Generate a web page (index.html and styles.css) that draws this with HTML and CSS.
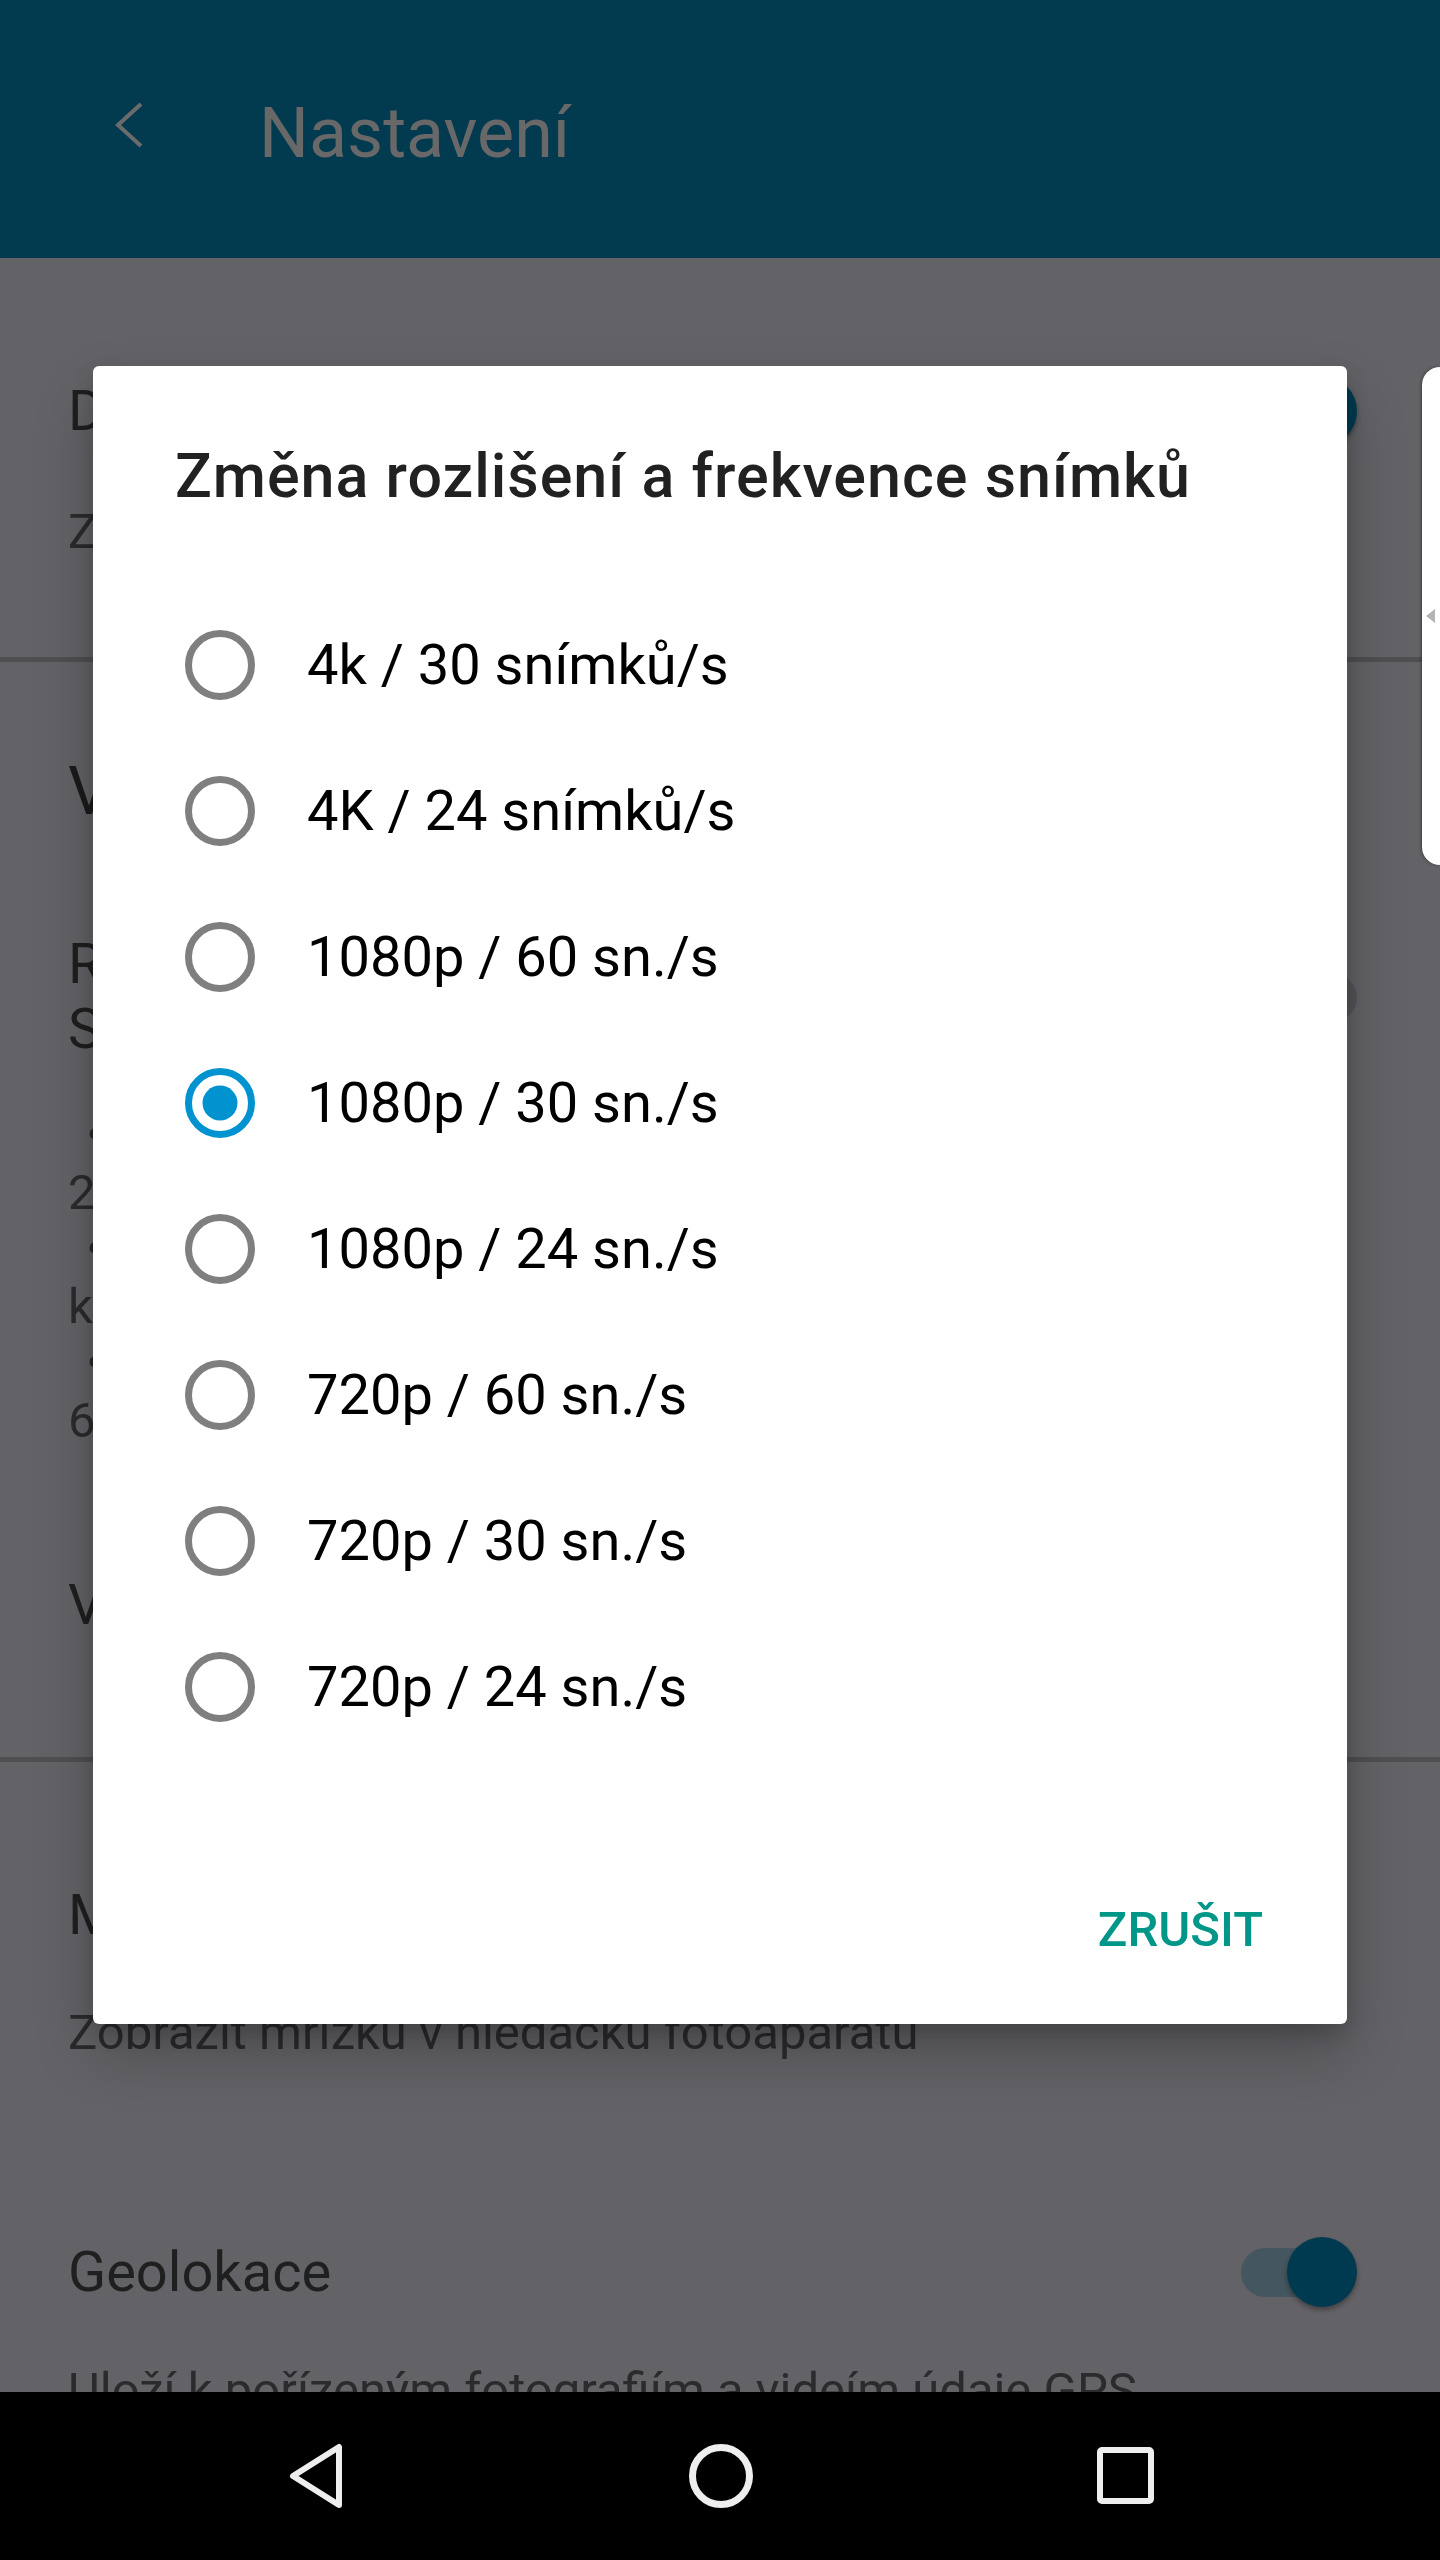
FILE: index.html
```html
<!DOCTYPE html>
<html lang="cs">
<head>
<meta charset="utf-8">
<title>Nastavení</title>
<link rel="stylesheet" href="styles.css">
</head>
<body>
<div class="screen">
  <header class="appbar">
    <svg class="back" width="32" height="46" viewBox="0 0 32 46"><polyline points="27,2 4,23 27,44" fill="none" stroke="#6b6b6b" stroke-width="4"/></svg>
    <h1 class="appbar-title">Nastavení</h1>
  </header>

  <main class="list">
    <section class="pref pref-first">
      <div class="pref-head">
        <div class="pref-title">Detekce úsměvu</div>
        <div class="toggle on"><span class="track"></span><span class="knob"></span></div>
      </div>
      <div class="pref-summary">Zachytí snímek</div>
    </section>
    <div class="divider div-1"></div>

    <section class="group">
      <div class="group-title">Video</div>
      <div class="pref-head two-line">
        <div class="pref-title">Rozlišení<br>Snímky</div>
        <div class="toggle off"><span class="track"></span><span class="knob"></span></div>
      </div>
      <div class="bullets">
        <div class="bullet-line">&nbsp;• 4K</div>
        <div>2160p</div>
        <div class="bullet-line">&nbsp;• HD</div>
        <div>kvalita</div>
        <div class="bullet-line">&nbsp;• sn.</div>
        <div>60 sn./s</div>
      </div>
      <div class="pref-title group-last">Video stabilizace</div>
    </section>
    <div class="divider div-2"></div>

    <section class="pref pref-grid">
      <div class="pref-head">
        <div class="pref-title">Mřížka</div>
      </div>
      <div class="pref-summary">Zobrazit mřížku v hledáčku fotoaparátu</div>
    </section>

    <section class="pref pref-geo">
      <div class="pref-head">
        <div class="pref-title">Geolokace</div>
        <div class="toggle on"><span class="track"></span><span class="knob"></span></div>
      </div>
      <div class="pref-summary">Uloží k pořízeným fotografiím a videím údaje GPS</div>
    </section>
  </main>

  <nav class="navbar">
    <svg class="nav-back" width="60" height="70" viewBox="0 0 60 70"><polygon points="53,6 53,64 7,35" fill="none" stroke="#eeeeee" stroke-width="6" stroke-linejoin="round"/></svg>
    <svg class="nav-home" width="70" height="70" viewBox="0 0 70 70"><circle cx="35" cy="35" r="28.5" fill="none" stroke="#eeeeee" stroke-width="7"/></svg>
    <svg class="nav-recent" width="64" height="64" viewBox="0 0 64 64"><rect x="6" y="6" width="51" height="51" rx="2" fill="none" stroke="#eeeeee" stroke-width="6"/></svg>
  </nav>

  <div class="edge-handle"><span class="edge-arrow"></span></div>

  <div class="dialog" role="dialog">
    <h2 class="dialog-title">Změna rozlišení a frekvence snímků</h2>
    <div class="options">
      <div class="option"><svg class="radio" width="70" height="70" viewBox="0 0 70 70"><circle cx="35" cy="35" r="31.5" fill="none" stroke="#7f7f7f" stroke-width="7"/></svg><span class="option-label">4k / 30 snímků/s</span></div>
      <div class="option"><svg class="radio" width="70" height="70" viewBox="0 0 70 70"><circle cx="35" cy="35" r="31.5" fill="none" stroke="#7f7f7f" stroke-width="7"/></svg><span class="option-label">4K / 24 snímků/s</span></div>
      <div class="option"><svg class="radio" width="70" height="70" viewBox="0 0 70 70"><circle cx="35" cy="35" r="31.5" fill="none" stroke="#7f7f7f" stroke-width="7"/></svg><span class="option-label">1080p / 60 sn./s</span></div>
      <div class="option"><svg class="radio" width="70" height="70" viewBox="0 0 70 70"><circle cx="35" cy="35" r="31.5" fill="none" stroke="#0093d0" stroke-width="7"/><circle cx="35" cy="35" r="17.5" fill="#0093d0"/></svg><span class="option-label">1080p / 30 sn./s</span></div>
      <div class="option"><svg class="radio" width="70" height="70" viewBox="0 0 70 70"><circle cx="35" cy="35" r="31.5" fill="none" stroke="#7f7f7f" stroke-width="7"/></svg><span class="option-label">1080p / 24 sn./s</span></div>
      <div class="option"><svg class="radio" width="70" height="70" viewBox="0 0 70 70"><circle cx="35" cy="35" r="31.5" fill="none" stroke="#7f7f7f" stroke-width="7"/></svg><span class="option-label">720p / 60 sn./s</span></div>
      <div class="option"><svg class="radio" width="70" height="70" viewBox="0 0 70 70"><circle cx="35" cy="35" r="31.5" fill="none" stroke="#7f7f7f" stroke-width="7"/></svg><span class="option-label">720p / 30 sn./s</span></div>
      <div class="option"><svg class="radio" width="70" height="70" viewBox="0 0 70 70"><circle cx="35" cy="35" r="31.5" fill="none" stroke="#7f7f7f" stroke-width="7"/></svg><span class="option-label">720p / 24 sn./s</span></div>
    </div>
    <div class="actions">
      <span class="btn">ZRUŠIT</span>
    </div>
  </div>
</div>
</body>
</html>
```

FILE: styles.css
```css
* { box-sizing: border-box; margin: 0; padding: 0; }

body {
  margin: 0;
  font-family: Roboto, "Noto Sans", "Liberation Sans", sans-serif;
  background: #000;
}

.screen {
  position: relative;
  width: 1440px;
  height: 2560px;
  display: flex;
  flex-direction: column;
  overflow: hidden;
  background: #636266;
}

/* ---------- app bar ---------- */
.appbar {
  height: 258px;
  flex-shrink: 0;
  background: #023a4f;
  display: flex;
  align-items: flex-start;
}
.back {
  margin-left: 114px;
  margin-top: 102px;
  flex-shrink: 0;
}
.appbar-title {
  margin-left: 113px;
  margin-top: 92px;
  font-size: 70px;
  line-height: 82px;
  font-weight: 400;
  color: #686868;
}

/* ---------- background settings list ---------- */
.list {
  flex: 1;
  overflow: hidden;
  padding: 0 83px 0 68px;
  color: #1f1f20;
}
.pref-head {
  display: flex;
  align-items: center;
  justify-content: space-between;
}
.pref-title {
  font-size: 56px;
  line-height: 66px;
  color: #1e1f1f;
}
.pref-summary {
  font-size: 49px;
  line-height: 57px;
  color: #2b2b2d;
  margin-top: 57px;
  white-space: nowrap;
}
.pref-first { margin-top: 118px; }
.divider {
  height: 5px;
  background: #4f4f52;
  margin-left: -68px;
  margin-right: -83px;
}
.div-1 { margin-top: 97px; }
.group-title {
  margin-top: 92px;
  font-size: 66px;
  line-height: 76px;
  color: #1a1b1a;
}
.two-line { margin-top: 102px; align-items: center; }
.two-line .pref-title { line-height: 65px; }
.bullets {
  margin-top: 45px;
  font-size: 49px;
  line-height: 57px;
  color: #2b2b2d;
}
.bullet-line { padding-left: 6px; }
.group-last { margin-top: 123px; }
.div-2 { margin-top: 119px; }
.pref-grid { margin-top: 120px; }
.pref-grid .pref-summary { margin-top: 56px; }
.pref-geo { margin-top: 176px; }
.pref-geo .pref-summary { margin-top: 55px; }

.toggle {
  position: relative;
  width: 116px;
  height: 70px;
  flex-shrink: 0;
}
.toggle .track {
  position: absolute;
  left: 0;
  top: 11px;
  width: 105px;
  height: 49px;
  border-radius: 25px;
  background: #44565f;
}
.toggle .knob {
  position: absolute;
  right: 0;
  top: 0;
  width: 70px;
  height: 70px;
  border-radius: 50%;
  background: #003a50;
  box-shadow: 0 3px 5px rgba(0, 0, 0, 0.35);
}
.toggle.off .track { background: #555558; width: 116px; }
.toggle.off .knob { left: 0; right: auto; background: #6a6a6a; }

/* ---------- navigation bar ---------- */
.navbar {
  height: 168px;
  flex-shrink: 0;
  background: #000;
  display: flex;
  align-items: center;
  padding-left: 286px;
}
.nav-home { margin-left: 340px; }
.nav-recent { margin-left: 338px; }

/* ---------- edge panel handle (overlay) ---------- */
.edge-handle {
  position: absolute;
  top: 367px;
  right: 0;
  width: 18px;
  height: 498px;
  background: #ffffff;
  border-radius: 22px 0 0 22px;
  box-shadow: -1px 0 3px rgba(0, 0, 0, 0.35);
}
.edge-arrow {
  position: absolute;
  left: 4px;
  top: 242px;
  width: 0;
  height: 0;
  border-top: 7px solid transparent;
  border-bottom: 7px solid transparent;
  border-right: 9px solid #b4b4b4;
}

/* ---------- dialog (overlay) ---------- */
.dialog {
  position: absolute;
  left: 93px;
  top: 366px;
  width: 1254px;
  background: #ffffff;
  border-radius: 6px;
  box-shadow: 0 30px 60px rgba(0, 0, 0, 0.22), 0 10px 20px rgba(0, 0, 0, 0.16);
}
.dialog-title {
  padding: 75px 82px 0;
  font-size: 61px;
  line-height: 70px;
  font-weight: 500;
  letter-spacing: 1px;
  color: #212121;
  margin-bottom: 81px;
  white-space: nowrap;
}
.option {
  display: flex;
  align-items: center;
  height: 146px;
  padding-left: 92px;
}
.radio { flex-shrink: 0; }
.option-label {
  margin-left: 52px;
  font-size: 56px;
  line-height: 66px;
  color: #000;
  white-space: nowrap;
}
.actions {
  display: flex;
  justify-content: flex-end;
  padding: 142px 84px 66px 0;
}
.btn {
  font-size: 49px;
  line-height: 56px;
  font-weight: 500;
  color: #009688;
}
```
